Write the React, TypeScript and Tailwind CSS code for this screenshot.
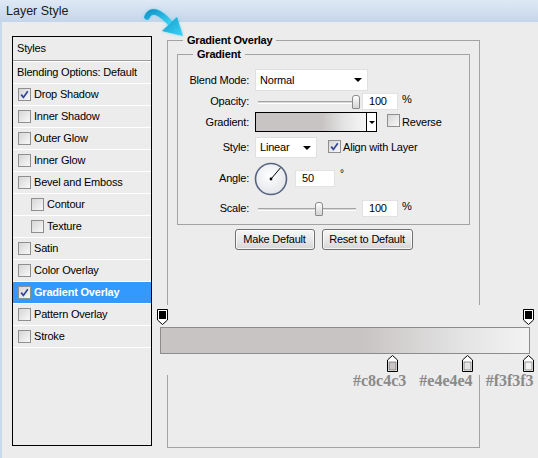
import React from "react";

const styleItems = [
  { label: "Drop Shadow", checked: true },
  { label: "Inner Shadow" },
  { label: "Outer Glow" },
  { label: "Inner Glow" },
  { label: "Bevel and Emboss" },
  { label: "Contour", indent: true },
  { label: "Texture", indent: true },
  { label: "Satin" },
  { label: "Color Overlay" },
  { label: "Gradient Overlay", checked: true, active: true },
  { label: "Pattern Overlay" },
  { label: "Stroke" },
];

function Check({ checked }: { checked?: boolean }) {
  return (
    <span className="relative inline-block h-[13px] w-[13px] shrink-0 border border-[#8f8f8f] bg-gradient-to-br from-[#d6d6d6] to-[#f8f8f8]">
      {checked && (
        <svg viewBox="0 0 11 11" className="absolute left-0 top-0 h-[11px] w-[11px]">
          <path d="M2.2 5.6 L4.4 8.4 L8.8 2.2" fill="none" stroke="#33449a" strokeWidth="1.7" />
        </svg>
      )}
    </span>
  );
}

function DownTri() {
  return (
    <svg viewBox="0 0 8 4" className="h-[4px] w-[8px]">
      <path d="M0 0 H8 L4 4 Z" fill="#000" />
    </svg>
  );
}

function Slider({ track, thumb }: { track: number; thumb: number }) {
  return (
    <div className="relative ml-[3px] h-[16px] w-[104px]">
      <div
        className="absolute left-0 top-[7px] h-[3px] border-t border-b border-t-[#a5a5a5] border-b-white bg-[#d9d9d9]"
        style={{ width: track }}
      />
      <div
        className="absolute top-[1px] h-[14px] w-[8px] rounded-t-[3px] rounded-b-[1px] border border-[#8a8a8a] bg-gradient-to-b from-white to-[#d4d4d4]"
        style={{ left: thumb }}
      />
    </div>
  );
}

function NumBox({ value, w = 36 }: { value: string; w?: number }) {
  return (
    <div
      className="flex h-[17px] items-center border border-[#e2e2e2] bg-white pl-[6px] text-black"
      style={{ width: w }}
    >
      {value}
    </div>
  );
}

function Label({ children }: { children: React.ReactNode }) {
  return <div className="w-[72px] shrink-0 pr-[1px] text-right">{children}</div>;
}

function Button({ children, w }: { children: React.ReactNode; w: number }) {
  return (
    <button
      className="flex h-[21px] items-center justify-center rounded-[3px] border border-[#707070] bg-gradient-to-b from-[#f6f6f6] via-[#e8e8e8] to-[#d6d6d6] text-black shadow-[inset_0_0_0_1px_rgba(255,255,255,0.7)]"
      style={{ width: w }}
    >
      {children}
    </button>
  );
}

function TopStop({ left }: { left: number }) {
  return (
    <svg viewBox="0 0 11 16" className="absolute top-[4px] h-[16px] w-[11px]" style={{ left }}>
      <path d="M0.5 0.5 H10.5 V11 L5.5 15.5 L0.5 11 Z" fill="#fff" stroke="#000" />
      <rect x="2" y="2" width="7" height="8" fill="#000" />
    </svg>
  );
}

function BottomStop({ left, color }: { left: number; color: string }) {
  return (
    <svg viewBox="0 0 11 17" className="absolute top-[50px] h-[17px] w-[11px]" style={{ left }}>
      <path d="M5.5 0.5 L10.5 5 V16.5 H0.5 V5 Z" fill="#fff" stroke="#000" />
      <rect x="2" y="7" width="7" height="8" fill={color} stroke="#555" strokeWidth="0.6" />
    </svg>
  );
}

export default function App() {
  return (
    <div className="relative h-[458px] w-[538px] overflow-hidden bg-[#ececec] text-[11px] leading-[13px] tracking-[-0.2px] text-black [font-family:'Liberation_Sans',Arial,sans-serif]">
      {/* title bar */}
      <div className="flex h-[22px] items-center bg-gradient-to-b from-[#dfe9f5] to-[#c4d5ea] px-[6px] text-[12.5px] tracking-normal text-[#1a1a1a]">
        Layer Style
      </div>

      <div className="flex h-[436px] items-start border-l-2 border-[#c9d9ec] pl-[10px] pt-[14px]">
        {/* styles list */}
        <div className="flex h-[410px] w-[140px] shrink-0 flex-col border border-black">
          <div className="flex h-[23px] items-center pl-[4px]">Styles</div>
          <div className="h-px bg-[#9c9c9c]" />
          <div className="h-px bg-white" />
          <div className="flex h-[22px] items-center border-b border-white pl-[4px]">
            Blending Options: Default
          </div>
          {styleItems.map((it) => (
            <div
              key={it.label}
              className={`flex h-[22px] items-center gap-[3px] border-b border-white ${
                it.indent ? "pl-[18px]" : "pl-[5px]"
              } ${it.active ? "bg-[#3399ff] font-bold text-white" : ""}`}
            >
              <Check checked={it.checked} />
              <span>{it.label}</span>
            </div>
          ))}
        </div>

        {/* settings */}
        <fieldset className="ml-[15px] mt-[-3px] h-[415px] w-[313px] shrink-0 border border-[#a3a3a3]">
          <legend className="ml-[15px] px-[4px] font-bold leading-[14px]">Gradient Overlay</legend>

          <fieldset className="mx-[9px] h-[178px] w-[293px] border border-[#a3a3a3]">
            <legend className="ml-[15px] px-[4px] font-bold leading-[14px]">Gradient</legend>

            <div className="mt-[8px] flex h-[22px] items-center">
              <Label>Blend Mode:</Label>
              <div className="ml-[5px] flex h-[22px] w-[113px] items-center justify-between border border-[#e0e0e0] bg-white pl-[4px] pr-[5px]">
                <span>Normal</span>
                <DownTri />
              </div>
            </div>

            <div className="mt-[2px] flex h-[17px] items-center">
              <Label>Opacity:</Label>
              <div className="ml-[5px]">
                <Slider track={96} thumb={94} />
              </div>
              <NumBox value="100" />
              <span className="ml-[4px] self-start">%</span>
            </div>

            <div className="mt-[2px] flex h-[20px] items-center">
              <Label>Gradient:</Label>
              <div className="ml-[5px] flex h-[20px] w-[122px] border border-black">
                <div className="h-full flex-1 bg-[linear-gradient(to_right,#c8c4c3_0%,#c8c4c3_60%,#e4e4e4_80%,#f6f6f6_100%)]" />
                <div className="flex h-full w-[10px] items-center justify-center border-l border-black bg-white">
                  <svg viewBox="0 0 6 3" className="h-[3px] w-[6px]">
                    <path d="M0 0 H6 L3 3 Z" fill="#000" />
                  </svg>
                </div>
              </div>
              <div className="ml-[10px]">
                <Check />
              </div>
              <span className="ml-[2px]">Reverse</span>
            </div>

            <div className="mt-[5px] flex h-[21px] items-center">
              <Label>Style:</Label>
              <div className="ml-[5px] flex h-[21px] w-[62px] items-center justify-between border border-[#e0e0e0] bg-white pl-[4px] pr-[5px]">
                <span>Linear</span>
                <DownTri />
              </div>
              <div className="ml-[11px]">
                <Check checked />
              </div>
              <span className="ml-[2px]">Align with Layer</span>
            </div>

            <div className="mt-[4px] flex h-[33px] items-center">
              <Label>Angle:</Label>
              <svg viewBox="0 0 34 34" className="ml-[4px] h-[34px] w-[34px]">
                <defs>
                  <radialGradient id="dial" cx="45%" cy="40%" r="60%">
                    <stop offset="0%" stopColor="#ffffff" />
                    <stop offset="100%" stopColor="#e4e6ea" />
                  </radialGradient>
                </defs>
                <circle cx="17" cy="17" r="15.5" fill="url(#dial)" stroke="#56637f" strokeWidth="1.6" />
                <line x1="17" y1="17" x2="26.5" y2="5.8" stroke="#000" strokeWidth="1" />
                <circle cx="17" cy="17" r="1.4" fill="#000" />
              </svg>
              <div className="ml-[7px]">
                <NumBox value="50" w={40} />
              </div>
              <span className="mb-[10px] ml-[5px] text-[10px]">°</span>
            </div>

            <div className="mt-[5px] flex h-[17px] items-center">
              <Label>Scale:</Label>
              <div className="ml-[5px]">
                <Slider track={98} thumb={57} />
              </div>
              <NumBox value="100" />
              <span className="ml-[4px] self-start">%</span>
            </div>
          </fieldset>

          <div className="mt-[4px] flex justify-center gap-[7px]">
            <Button w={80}>Make Default</Button>
            <Button w={91}>Reset to Default</Button>
          </div>
        </fieldset>
      </div>

      {/* gradient editor overlay */}
      <div className="absolute left-[153px] top-[305px] h-[70px] w-[385px] bg-[#ececec]">
        <TopStop left={4} />
        <TopStop left={370} />
        <div className="absolute left-[7px] top-[22px] h-[27px] w-[370px] border border-[#8c8c8c] bg-[linear-gradient(to_right,#c8c4c3_0%,#c8c4c3_55%,#e4e4e4_82%,#f3f3f3_100%)]" />
        <BottomStop left={234} color="#c8c4c3" />
        <BottomStop left={309} color="#e4e4e4" />
        <BottomStop left={370} color="#f3f3f3" />
      </div>
      <div className="absolute left-[353px] top-[372px] flex gap-[13px] text-[16px] font-bold leading-[18px] tracking-normal text-[#8a8a8a] [font-family:'Liberation_Serif','Times_New_Roman',serif]">
        <span>#c8c4c3</span>
        <span>#e4e4e4</span>
        <span>#f3f3f3</span>
      </div>

      {/* cyan pointer arrow */}
      <svg viewBox="0 0 50 40" className="absolute left-[140px] top-[2px] h-[40px] w-[50px]">
        <defs>
          <linearGradient id="arw" x1="0" y1="0" x2="1" y2="1">
            <stop offset="0%" stopColor="#1597c9" />
            <stop offset="100%" stopColor="#3ad6f6" />
          </linearGradient>
        </defs>
        <g style={{ filter: "drop-shadow(0 0 1.5px rgba(60,200,240,0.6))" }}>
          <path d="M7 15 Q13 2 31 22" fill="none" stroke="url(#arw)" strokeWidth="5.5" strokeLinecap="round" />
          <path d="M43 34 L22 29 L37 15 Z" fill="url(#arw)" />
        </g>
      </svg>
    </div>
  );
}
